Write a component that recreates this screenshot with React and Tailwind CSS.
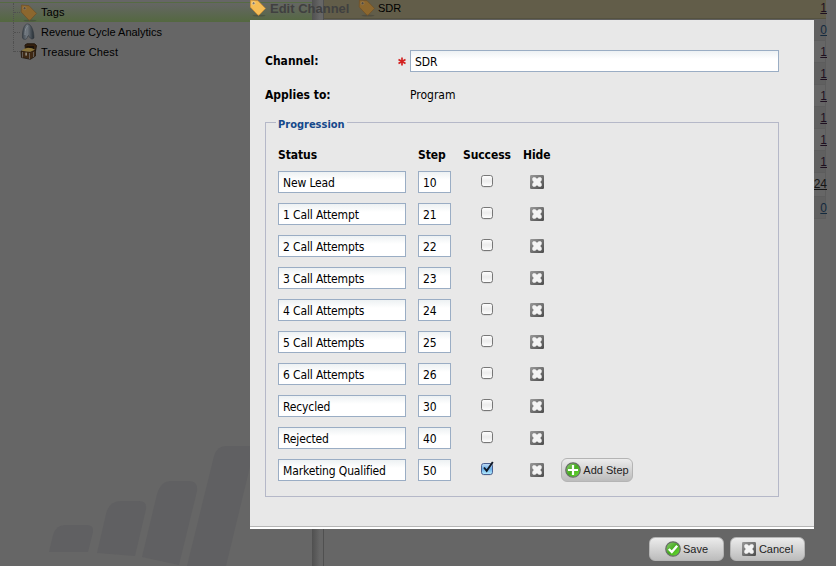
import React from 'react';

const TAHOMA = "font-['DejaVu_Sans_Condensed','DejaVu_Sans',sans-serif] [font-stretch:condensed]";
const ARIAL = "font-['Liberation_Sans',Arial,sans-serif]";

function TagIcon({ dim = false }) {
  return (
    <svg width="18" height="18" viewBox="0 0 18 18" className="block shrink-0">
      <ellipse cx="10" cy="16.6" rx="6.5" ry="1" fill="#333" opacity=".35" />
      <path d="M1.5 1 L9 1.7 L16.5 9.4 L10 16.2 L8.8 16 L1.2 8 Z" fill={dim ? '#8c672e' : '#f5bd55'} stroke={dim ? '#6e522b' : '#c88b35'} strokeWidth=".8" strokeLinejoin="round" />
      <circle cx="4.6" cy="4.2" r="1.5" fill={dim ? '#504b40' : '#7d756b'} stroke={dim ? '#a18257' : '#ffe3a5'} strokeWidth=".7" />
    </svg>
  );
}

function AnalyticsIcon() {
  return (
    <svg width="18" height="18" viewBox="0 0 18 18" className="block shrink-0">
      <defs>
        <linearGradient id="steel" x1="0" x2="1">
          <stop offset="0" stopColor="#3d454c" />
          <stop offset=".4" stopColor="#737a81" />
          <stop offset="1" stopColor="#252d34" />
        </linearGradient>
      </defs>
      <path d="M2.5 15 C2 8 4 1 7.5 1 C11.5 1 14 8 14 15 C12 17 10 15.500 8.500 12.500 C7.500 12.500 7.500 16 5.500 16.300 C4 16.500 3 16 2.500 15Z" fill="url(#steel)" stroke="#30383e" strokeWidth=".6" />
      <path d="M5 12 C5 7 6 3.500 8 3.500" stroke="#858c93" fill="none" />
    </svg>
  );
}

function ChestIcon() {
  return (
    <svg width="18" height="18" viewBox="0 0 18 18" className="block shrink-0">
      <path d="M5 2 L7 .8 H14.500 L16.500 2.500 L15.500 8 L5.500 7Z" fill="#35210f" stroke="#22170d" />
      <path d="M6.500 3 H14 L14 6 L6.500 5.500Z" fill="#1a120b" />
      <path d="M1 8 L10 9 L15.500 7 V13 L10.500 16.300 L1.500 14.500Z" fill="#3f2914" stroke="#20170d" strokeWidth=".8" />
      <path d="M1.500 7.500 L5 5.500 L8 4.800 L12 5.200 L15 6.800 L10.500 8.800 L6 8.600Z" fill="#897339" />
      <path d="M2.500 9V14.500M9.500 10V16M13.500 9V14" stroke="#66615b" strokeWidth=".9" />
      <rect x="5.300" y="9.600" width="1.700" height="3" fill="#8c8678" />
    </svg>
  );
}

function CrossIcon() {
  return (
    <svg width="14" height="14" viewBox="0 0 14 14" className="block shrink-0">
      <defs>
        <linearGradient id="crossBg" x1="0" y1="0" x2="1" y2="1">
          <stop offset="0" stopColor="#999" />
          <stop offset="1" stopColor="#4c4c4c" />
        </linearGradient>
      </defs>
      <rect width="14" height="14" rx="1.200" fill="url(#crossBg)" />
      <path d="M2.300 3.200 L3.400 2.200 H5.200 L7 3.800 L8.800 2.200 H10.600 L11.700 3.200 V5.200 L10.200 7 L11.700 8.800 V10.800 L10.600 11.800 H8.800 L7 10.200 L5.200 11.800 H3.400 L2.300 10.800 V8.800 L3.800 7 L2.300 5.200Z" fill="#f4f4f4" />
    </svg>
  );
}

function GreenIcon({ plus = false }) {
  return (
    <svg width="16" height="16" viewBox="0 0 16 16" className="block shrink-0">
      <defs>
        <linearGradient id="green" x1="0" y1="0" x2="1" y2="1">
          <stop offset="0" stopColor="#93cf76" />
          <stop offset=".5" stopColor="#45ac20" />
          <stop offset="1" stopColor="#6ee832" />
        </linearGradient>
      </defs>
      <circle cx="8" cy="8" r="7.200" fill="url(#green)" stroke="#686e68" strokeWidth="1.300" />
      {plus
        ? <path d="M8 3V13M3 8H13" stroke="#fff" strokeWidth="2.200" />
        : <path d="M3.800 8 L6.800 11 L12.200 4.800" fill="none" stroke="#fff" strokeWidth="2.400" />}
    </svg>
  );
}

function Check({ checked }) {
  return (
    <svg width="14" height="16" viewBox="0 0 14 16" className="block">
      <defs>
        <linearGradient id="boxOff" x1="0" y1="0" x2="0" y2="1">
          <stop offset="0" stopColor="#fff" />
          <stop offset=".5" stopColor="#ececec" />
          <stop offset="1" stopColor="#fff" />
        </linearGradient>
        <linearGradient id="boxOn" x1="0" y1="0" x2="0" y2="1">
          <stop offset="0" stopColor="#c4ddf5" />
          <stop offset=".5" stopColor="#69aee9" />
          <stop offset="1" stopColor="#b9f0ff" />
        </linearGradient>
      </defs>
      <rect x="1.500" y="3.500" width="11" height="11" rx="2.500" fill="#b5b5b5" opacity=".6" />
      <rect x="1.500" y="2.500" width="11" height="11" rx="2.200" fill={checked ? 'url(#boxOn)' : 'url(#boxOff)'} stroke={checked ? '#4b5f91' : '#777'} />
      {checked && <path d="M4 6.500 L6.700 9.800 L12.800 1" fill="none" stroke="#111927" strokeWidth="1.900" />}
    </svg>
  );
}

function Field({ children, className }) {
  return (
    <div className={`box-border flex h-[22px] items-center border border-[#9aadc4] bg-white bg-linear-to-b from-[#edf1f3] to-white to-40% pt-px pl-1 tracking-[-0.14px] whitespace-nowrap ${className}`}>
      {children}
    </div>
  );
}

function Button({ icon, children, className }) {
  return (
    <button className={`${ARIAL} box-border flex h-6 items-center justify-center rounded-[6px] border border-[#b4b4b4] bg-linear-to-b from-[#ececec] to-[#bcbcbc] text-[11px] text-[#222] whitespace-nowrap ${className}`}>
      {icon}
      <span>{children}</span>
    </button>
  );
}

const steps = [
  ['New Lead', 10], ['1 Call Attempt', 21], ['2 Call Attempts', 22], ['3 Call Attempts', 23],
  ['4 Call Attempts', 24], ['5 Call Attempts', 25], ['6 Call Attempts', 26], ['Recycled', 30],
  ['Rejected', 40], ['Marketing Qualified', 50],
];

const tree = [['Tags', <TagIcon dim />], ['Revenue Cycle Analytics', <AnalyticsIcon />], ['Treasure Chest', <ChestIcon />]];

const counts = ['0', '1', '1', '1', '1', '1', '1', '24', '0'];

function Sidebar() {
  return (
    <div className="flex w-[312px] shrink-0 flex-col justify-between bg-[#666]">
      <div className="pt-[2px]">
        {tree.map(([label, icon], i) => (
          <div key={label} className={`flex h-5 items-center pl-[13px] ${i === 0 ? 'border-t border-[#566b43] bg-linear-to-b from-[#656664] to-[#546840]' : ''}`}>
            <div className={`flex w-[7px] shrink-0 flex-col border-l border-dotted border-[#505050] ${i === 2 ? 'h-[10px] self-start' : 'h-5 justify-center'}`}>
              <div className={`border-t border-dotted border-[#505050] ${i === 2 ? 'mt-auto' : ''}`} />
            </div>
            {icon}
            <span className={`ml-[3px] text-[11px] text-black ${i === 1 ? '' : 'tracking-[0.12px]'}`}>{label}</span>
          </div>
        ))}
      </div>
      <svg width="312" height="126" viewBox="0 440 312 126" className="block">
        <g fill="#606062">
          <path d="M49 552 L53 535 Q56 525 65 525 H87 Q94 525 93 532 L88 552Z" />
          <path d="M97 553 L106 514 Q109 501 121 501 H139 Q147 501 146 509 L135 556Z" />
          <path d="M142 557 L157 494 Q161 481 171 481 H189 Q198 481 197 491 L179 565Z" />
          <path d="M187 566 L214 456 Q217 446 226 446 H255 L226 566Z" />
        </g>
      </svg>
    </div>
  );
}

export default function App() {
  return (
    <div className={`${ARIAL} relative flex h-[566px] w-[836px] overflow-hidden bg-[#666]`}>
      <Sidebar />
      <div className="w-[12px] shrink-0 border-r border-r-[#505050] bg-linear-to-r from-[#505050] to-[#666] to-70%" />
      <div className="flex grow flex-col pr-[10px]">
        <div className="flex h-[19px] shrink-0 items-center justify-between border-b border-[#55523f] bg-[#625d49] pb-[2px] pl-[34px] text-[11px]">
          <div className="flex items-center gap-[2px]"><TagIcon dim /><span>SDR</span></div>
          <span className="-mr-px text-[12px] text-[#1e1020] underline">1</span>
        </div>
        {counts.map((n, i) => (
          <div key={i} className={`flex shrink-0 items-center justify-end border-r border-b border-[#5d5d5d] text-[12px] underline ${i === 7 ? 'h-[24px] pb-[2px]' : 'h-[22px]'} ${i % 2 ? 'bg-[#666]' : 'bg-[#606060]'} ${n === '0' ? 'text-[#142a3e]' : n === '24' ? 'text-[#151515]' : 'text-[#1e1020]'}`}>
            <span className="-mr-[2px]">{n}</span>
          </div>
        ))}
      </div>

      <div className="absolute top-0 left-[250px] w-[564px]">
        <div className="flex h-5 items-start gap-[3px] overflow-hidden">
          <div className="-mt-px -ml-px"><TagIcon /></div>
          <span className="text-[13px] leading-[17px] font-bold text-[#404040]">Edit Channel</span>
        </div>
        <div className={`${TAHOMA} h-[509px] border-b-2 border-white bg-[#e8e8e8] px-[15px] pt-[30px] text-[12px] text-black shadow-[inset_0_-1px_0_#b5b5b5]`}>
          <div className="flex h-[22px] items-center">
            <span className="w-[133px] font-bold">Channel:</span>
            <svg width="8" height="9" viewBox="0 0 8 9" className="mr-1 mt-[1px] shrink-0"><path d="M4 .5V8.500M.5 2.500L7.500 6.500M7.500 2.500L.5 6.500" stroke="#d3201f" strokeWidth="1.700" /></svg>
            <Field className="w-[369px]">SDR</Field>
          </div>
          <div className="mt-[12px] flex h-[22px] items-center">
            <span className="w-[145px] font-bold">Applies to:</span>
            <span>Program</span>
          </div>
          <div className="mt-[16px] h-[375px] w-[514px] border border-[#b5b8c8] px-3">
            <div className="-mt-[6px] -ml-[2px] flex h-4 w-[71px] items-center bg-[#e8e8e8] pl-[2px] text-[11px] font-bold whitespace-nowrap text-[#15498b]">Progression</div>
            <div className="mt-[13px] flex h-[18px] items-center font-bold tracking-[-0.08px]">
              <span className="w-[140px]">Status</span>
              <span className="w-[45px]">Step</span>
              <span className="w-[60px]">Success</span>
              <span>Hide</span>
            </div>
            <div className="mt-[7px] flex flex-col gap-[10px]">
              {steps.map(([name, n], i) => (
                <div key={name} className="flex h-[22px] items-center">
                  <Field className="w-[128px]">{name}</Field>
                  <Field className="ml-3 w-[33px]">{n}</Field>
                  <div className="ml-[29px] -mt-[2px]"><Check checked={i === 9} /></div>
                  <div className="ml-[36px]"><CrossIcon /></div>
                  {i === 9 && <Button icon={<GreenIcon plus />} className="ml-[17px] w-[72px] gap-[2px]">Add Step</Button>}
                </div>
              ))}
            </div>
          </div>
        </div>
        <div className="mt-2 flex justify-end gap-[6px] pr-[9px]">
          <Button icon={<GreenIcon />} className="w-[75px] gap-[2px]">Save</Button>
          <Button icon={<CrossIcon />} className="w-[75px] gap-[3px]">Cancel</Button>
        </div>
      </div>
    </div>
  );
}
